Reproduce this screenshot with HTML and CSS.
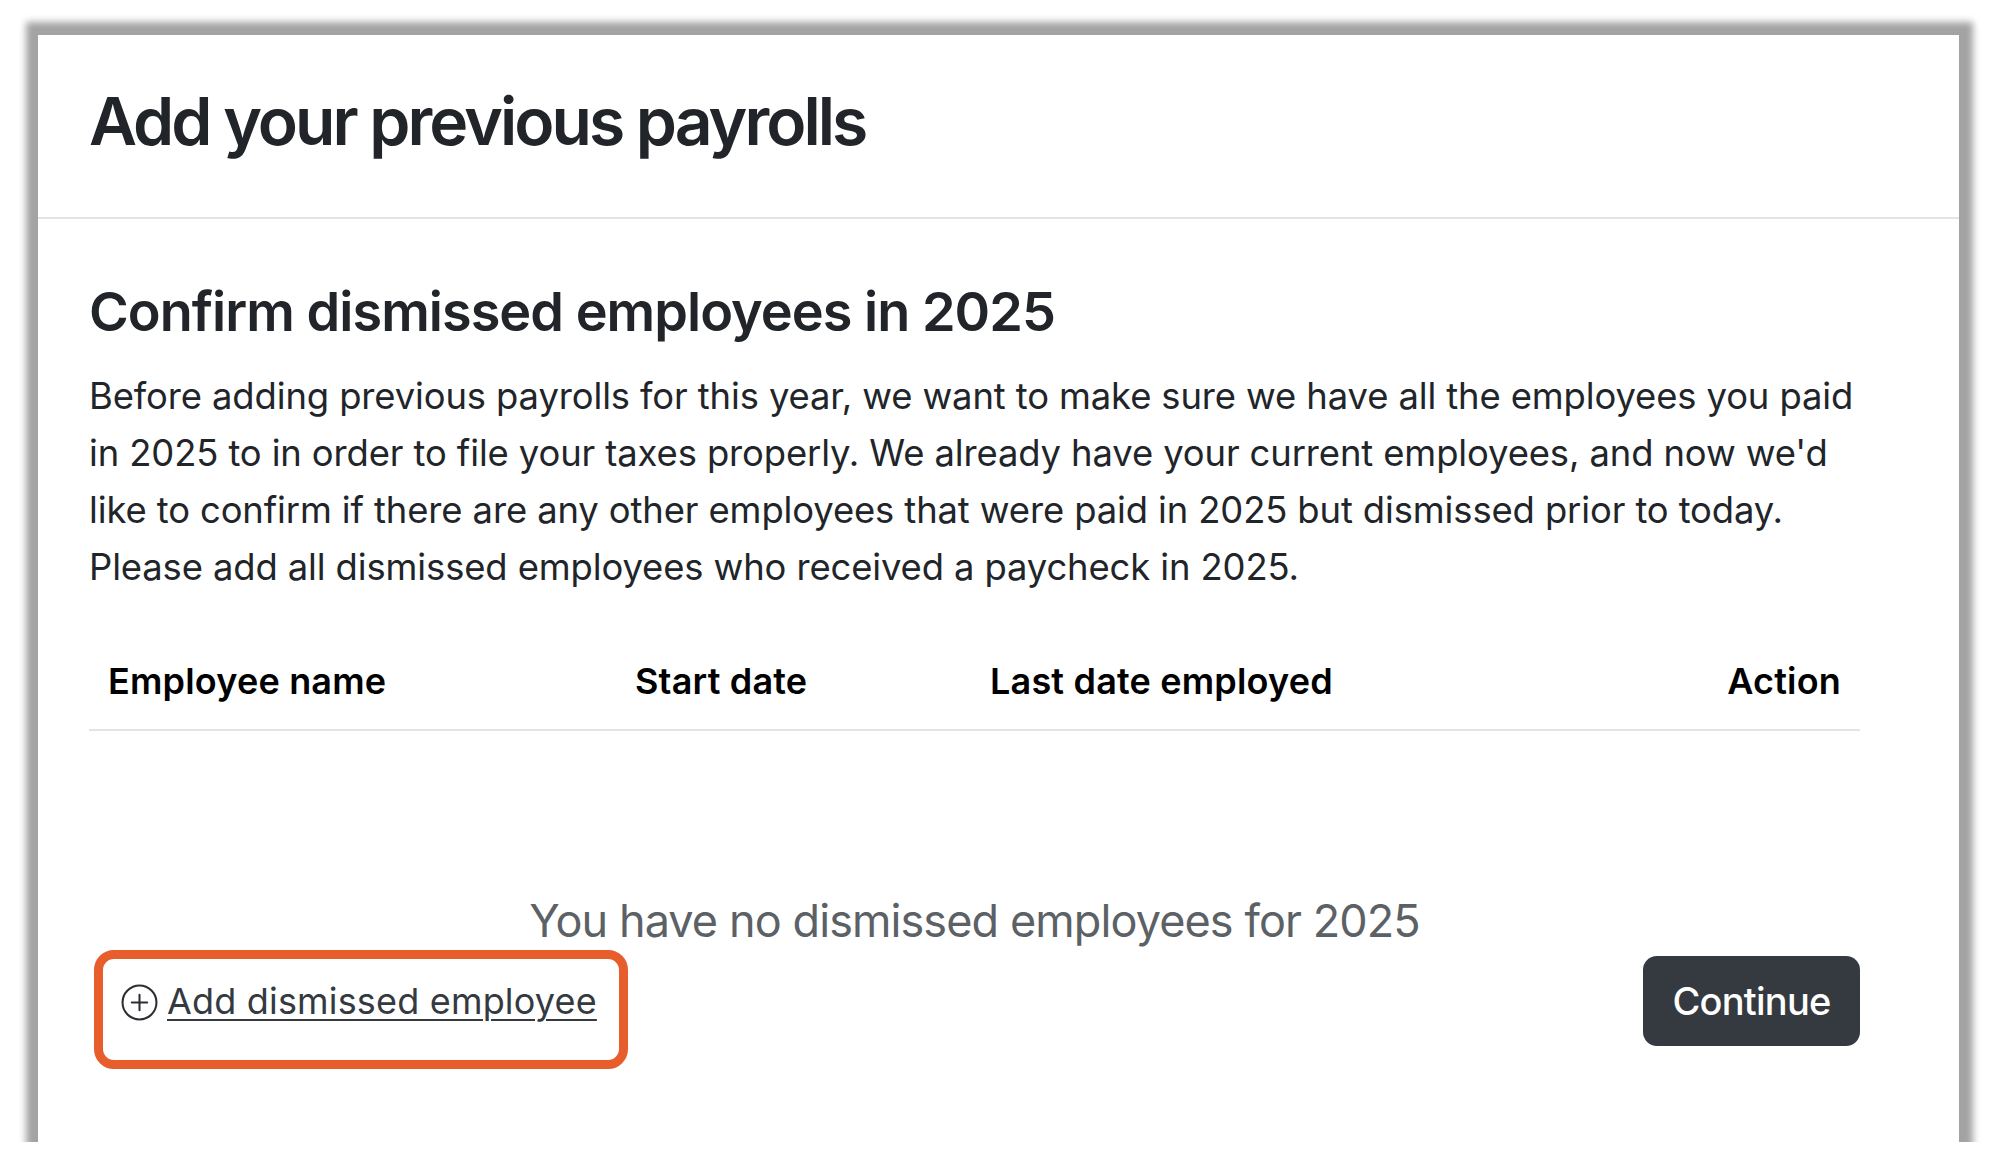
FILE: index.html
```html
<!DOCTYPE html>
<html lang="en">
<head>
<meta charset="utf-8">
<title>Add your previous payrolls</title>
<link rel="stylesheet" href="styles.css">
</head>
<body>
<main class="page">
  <section class="card">
    <header class="card-header">
      <h1 class="title">Add your previous payrolls</h1>
    </header>
    <div class="card-body">
      <h2 class="subtitle">Confirm dismissed employees in 2025</h2>
      <p class="intro">Before adding previous payrolls for this year, we want to make sure we have all the employees you paid in 2025 to in order to file your taxes properly. We already have your current employees, and now we'd like to confirm if there are any other employees that were paid in 2025 but dismissed prior to today. Please add all dismissed employees who received a paycheck in 2025.</p>
      <table class="emp-table">
        <colgroup>
          <col class="col-name">
          <col class="col-start">
          <col class="col-last">
          <col class="col-action">
        </colgroup>
        <thead>
          <tr>
            <th>Employee name</th>
            <th>Start date</th>
            <th>Last date employed</th>
            <th class="th-action">Action</th>
          </tr>
        </thead>
      </table>
      <p class="empty">You have no dismissed employees for 2025</p>
      <div class="footer-row">
        <a class="add-link" href="#">
          <svg class="plus-icon" viewBox="0 0 36 36" aria-hidden="true">
            <circle cx="18" cy="18" r="16.5" fill="none" stroke="currentColor" stroke-width="2"/>
            <path d="M18 10.5v15M10.5 18h15" fill="none" stroke="currentColor" stroke-width="2" stroke-linecap="round"/>
          </svg>
          <span class="add-text">Add dismissed employee</span>
          <span class="highlight"></span>
        </a>
        <button class="btn-continue" type="button">Continue</button>
      </div>
    </div>
  </section>
</main>
</body>
</html>
```

FILE: styles.css
```css
* { box-sizing: border-box; }

html, body {
  margin: 0;
  padding: 0;
  background: #ffffff;
}

body {
  font-family: Inter, "Noto Sans", "Liberation Sans", sans-serif;
  color: #212529;
}

.page {
  padding: 35px 0 0 38px;
}

.card {
  width: 1921px;
  background: #ffffff;
  box-shadow: 1px 0 7px 13px #a3a3a3;
}

.card-header {
  padding: 47px 51px 56px;
  border-bottom: 2px solid #e1e4e8;
}

.title {
  margin: 0;
  font-size: 66px;
  line-height: 1.2;
  font-weight: 600;
  letter-spacing: -0.045em;
  color: #212529;
}

.card-body {
  padding: 61px 99px 96px 51px;
}

.subtitle {
  margin: 0 0 23px;
  font-size: 54px;
  line-height: 1.2;
  font-weight: 600;
  letter-spacing: -0.018em;
  color: #212529;
}

.intro {
  margin: 0 -20px 37px 0;
  font-size: 36.4px;
  line-height: 57px;
  font-weight: 400;
  letter-spacing: -0.003em;
  color: #212529;
}

.emp-table {
  width: 100%;
  border-collapse: collapse;
  table-layout: fixed;
}

.col-name { width: 527px; }
.col-start { width: 355px; }
.col-action { width: 200px; }

.emp-table th {
  padding: 21px 19px;
  font-size: 36px;
  line-height: 54px;
  font-weight: 600;
  letter-spacing: 0.005em;
  text-align: left;
  color: #000000;
  border-bottom: 2px solid #e1e4e8;
}

.emp-table .th-action {
  text-align: right;
}

.empty {
  margin: 156px 0 0;
  font-size: 45px;
  line-height: 1.5;
  font-weight: 400;
  letter-spacing: -0.02em;
  text-align: center;
  color: #5c6166;
}

.footer-row {
  display: flex;
  align-items: center;
  justify-content: space-between;
  height: 90px;
  margin-top: 2px;
  padding-left: 32px;
}

.add-link {
  position: relative;
  display: flex;
  align-items: center;
  gap: 9px;
  height: 54px;
  color: #343a40;
  text-decoration: none;
}

.plus-icon {
  width: 37px;
  height: 37px;
  margin-top: 3px;
  color: #2b2f33;
}

.add-text {
  font-size: 36px;
  line-height: 1.5;
  letter-spacing: 0.005em;
  text-decoration: underline;
  text-decoration-thickness: 2px;
  text-underline-offset: 5px;
}

.highlight {
  position: absolute;
  left: -27px;
  top: -24px;
  width: 534px;
  height: 119px;
  border: 9px solid #e85d2c;
  border-radius: 20px;
  pointer-events: none;
}

.btn-continue {
  width: 217px;
  height: 90px;
  padding: 0;
  border: none;
  border-radius: 14px;
  background: #343a40;
  color: #ffffff;
  font-family: inherit;
  font-size: 38px;
  font-weight: 500;
  letter-spacing: -0.02em;
  cursor: pointer;
}
```
